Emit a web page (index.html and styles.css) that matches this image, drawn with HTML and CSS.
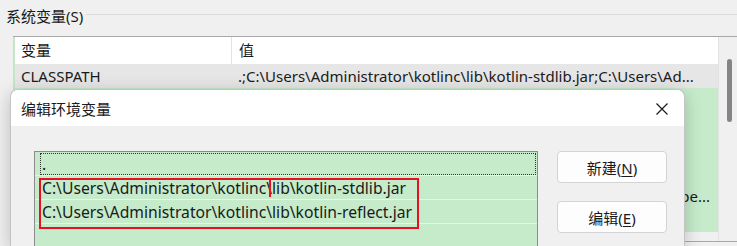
FILE: index.html
```html
<!DOCTYPE html>
<html lang="zh-CN">
<head>
    <meta charset="UTF-8">
    <title>环境变量</title>
    <link rel="stylesheet" href="styles.css">
</head>
<body>
    <div class="group-head"><span>系统变量(S)</span></div>

    <div class="vars">
        <div class="table">
            <div class="thead">
                <div class="col-name">变量</div>
                <div class="col-value">值</div>
            </div>
            <div class="trow current">
                <div class="col-name">CLASSPATH</div>
                <div class="col-value">.;C:\Users\Administrator\kotlinc\lib\kotlin-stdlib.jar;C:\Users\Ad...</div>
            </div>
            <div class="trow green"><div class="col-name">ComSpec</div><div class="col-value">C:\Windows\system32\cmd.exe</div></div>
            <div class="trow green"><div class="col-name">DriverData</div><div class="col-value">C:\Windows\System32\Drivers\DriverData</div></div>
            <div class="trow green"><div class="col-name">JAVA_HOME</div><div class="col-value">C:\Program Files\Java\jdk</div></div>
            <div class="trow green"><div class="col-name">NUMBER_OF_PROCESSORS</div><div class="col-value">8</div></div>
            <div class="trow green"><div class="col-name">Path</div><div class="col-value right">pe...</div></div>
            <div class="trow green"><div class="col-name">PATHEXT</div><div class="col-value">.COM;.EXE;.BAT</div></div>
        </div>
        <div class="scrollbar"><div class="thumb"></div></div>
    </div>

    <!-- 编辑环境变量 对话框 盖在列表上面 -->
    <div class="dialog">
        <div class="dialog-title">
            <span>编辑环境变量</span>
            <svg class="close" width="12" height="12" viewBox="0 0 12 12">
                <path d="M0.5 0.5 L11.5 11.5 M11.5 0.5 L0.5 11.5" stroke="#1a1a1a" stroke-width="1.2" fill="none"/>
            </svg>
        </div>
        <div class="dialog-body">
            <div class="paths">
                <div class="prow focus">.</div>
                <div class="prow">C:\Users\Administrator\kotlinc\lib\kotlin-stdlib.jar</div>
                <div class="prow">C:\Users\Administrator\kotlinc\lib\kotlin-reflect.jar</div>
                <div class="prow"></div>
                <div class="mark"></div>
                <div class="cursor"></div>
            </div>
            <div class="buttons">
                <button class="btn">新建(<u>N</u>)</button>
                <button class="btn">编辑(<u>E</u>)</button>
            </div>
        </div>
    </div>
</body>
</html>
```

FILE: styles.css
```css
html,body{
    height: 100%;
}
body{
    margin: 0;
    width: 737px;
    height: 246px;
    overflow: hidden;
    position: relative;
    background: #f0f0f0;
    font-family: "Noto Sans", "Noto Sans CJK SC", sans-serif;
    font-size: 15px;
    color: #1a1a1a;
}
.group-head{
    height: 30px;
    display: flex;
    align-items: center;
    padding-left: 6px;
    margin-bottom: 6px;
}
.group-head::after{
    content: "";
    flex: 1;
    border-top: 1px solid #dcdcdc;
    margin-left: 3px;
    margin-top: -2px;
}
.vars{
    margin-left: 13px;
    height: 204px;
    border-top: 1px solid #a8a8a8;
    border-bottom: 1px solid #a8a8a8;
    display: grid;
    grid-template-columns: 1fr 19px;
}
.table{
    border-left: 2px solid #c4e6c8;
    overflow: hidden;
}
.thead, .trow{
    display: flex;
    white-space: nowrap;
}
.thead{
    height: 27px;
    line-height: 27px;
    background: #fff;
}
.trow{
    height: 24px;
    line-height: 24px;
}
.col-name{
    width: 210px;
    padding-left: 6px;
    flex: none;
}
.thead .col-name{
    border-right: 1px solid #e3e3e3;
}
.col-value{
    padding-left: 7px;
    width: 472px;
    overflow: hidden;
}
.col-value.right{
    text-align: right;
}
.current{
    background: #e6e6e6;
}
.green{
    background: #c6ebcb;
}
.scrollbar{
    background: #f0f0f0;
    border-left: 1px solid #e2e2e2;
}
.thumb{
    margin: 22px 0 0 8px;
    width: 5px;
    height: 63px;
    border-radius: 3px;
    background: #858585;
}

/* 对话框 */
.dialog{
    position: absolute;
    left: 10px;
    top: 89px;
    width: 673px;
    height: 156px;
    border: 1px solid #c4c4c4;
    border-bottom: none;
    border-radius: 8px 8px 0 0;
    background: #f0f0f0;
    box-shadow: 0 4px 18px rgba(0, 0, 0, 0.22);
    overflow: hidden;
}
.dialog-title{
    height: 36px;
    background: #fff;
    display: flex;
    align-items: center;
    justify-content: space-between;
    padding: 0 16px 0 10px;
}
.close{
    margin-top: 1px;
}
.dialog-body{
    display: flex;
    padding: 25px 0 0 23px;
}
.paths{
    position: relative;
    width: 502px;
    height: 100px;
    border: 1px solid #8c8c8c;
    background: #c6ebcb;
    font-size: 15.7px;
}
.prow{
    height: 23px;
    line-height: 25px;
    border-bottom: 1px solid #e6f5e8;
    padding-left: 7px;
    white-space: nowrap;
    position: relative;
}
.prow.focus::after{
    content: "";
    position: absolute;
    left: 5px;
    right: 1px;
    top: 1px;
    bottom: 0;
    border: 1px dotted #333;
}
.mark{
    position: absolute;
    left: 4px;
    top: 26px;
    width: 376px;
    height: 47px;
    border: 2px solid #e81123;
}
.cursor{
    position: absolute;
    left: 234px;
    top: 27px;
    width: 2px;
    height: 18px;
    background: #e81123;
}
.buttons{
    display: flex;
    flex-direction: column;
    gap: 18px;
    margin-left: 19px;
}
.btn{
    width: 110px;
    height: 32px;
    background: #fdfdfd;
    border: 1px solid #d3d3d3;
    border-radius: 4px;
    font-family: "Noto Sans", "Noto Sans CJK SC", sans-serif;
    font-size: 15px;
    color: #1a1a1a;
    padding: 0;
}
.btn u{
    text-underline-offset: 2px;
}
```
